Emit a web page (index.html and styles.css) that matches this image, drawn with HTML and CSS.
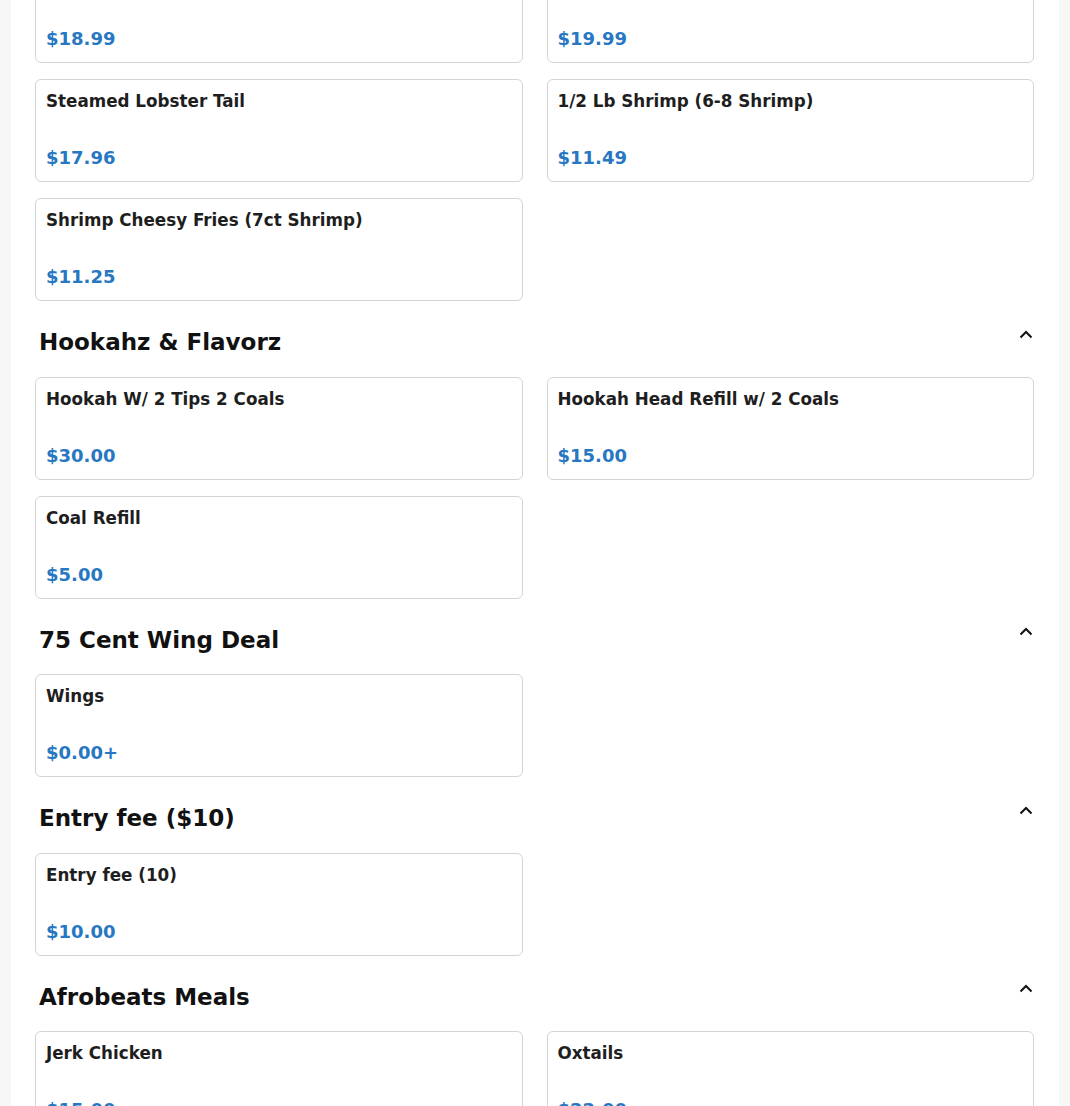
FILE: index.html
```html
<!DOCTYPE html>
<html lang="en">
<head>
<meta charset="utf-8">
<title>Menu</title>
<link rel="stylesheet" href="styles.css">
</head>
<body>
<main class="panel">
  <section class="section first">
    <div class="grid">
      <div class="card"><div class="name">Lobster Fries</div><div class="price">$18.99</div></div>
      <div class="card"><div class="name">Lobster Cheesy Fries</div><div class="price">$19.99</div></div>
      <div class="card"><div class="name">Steamed Lobster Tail</div><div class="price">$17.96</div></div>
      <div class="card"><div class="name">1/2 Lb Shrimp (6-8 Shrimp)</div><div class="price">$11.49</div></div>
      <div class="card"><div class="name">Shrimp Cheesy Fries (7ct Shrimp)</div><div class="price">$11.25</div></div>
    </div>
  </section>

  <section class="section">
    <div class="head"><h2>Hookahz &amp; Flavorz</h2><svg class="chev" viewBox="0 0 14 9" width="14" height="9"><path d="M1.5 7.5 L7 2 L12.5 7.5" fill="none" stroke="#111" stroke-width="2"/></svg></div>
    <div class="grid">
      <div class="card"><div class="name">Hookah W/ 2 Tips 2 Coals</div><div class="price">$30.00</div></div>
      <div class="card"><div class="name">Hookah Head Refill w/ 2 Coals</div><div class="price">$15.00</div></div>
      <div class="card"><div class="name">Coal Refill</div><div class="price">$5.00</div></div>
    </div>
  </section>

  <section class="section">
    <div class="head"><h2>75 Cent Wing Deal</h2><svg class="chev" viewBox="0 0 14 9" width="14" height="9"><path d="M1.5 7.5 L7 2 L12.5 7.5" fill="none" stroke="#111" stroke-width="2"/></svg></div>
    <div class="grid">
      <div class="card"><div class="name">Wings</div><div class="price">$0.00+</div></div>
    </div>
  </section>

  <section class="section">
    <div class="head"><h2>Entry fee ($10)</h2><svg class="chev" viewBox="0 0 14 9" width="14" height="9"><path d="M1.5 7.5 L7 2 L12.5 7.5" fill="none" stroke="#111" stroke-width="2"/></svg></div>
    <div class="grid">
      <div class="card"><div class="name">Entry fee (10)</div><div class="price">$10.00</div></div>
    </div>
  </section>

  <section class="section">
    <div class="head"><h2>Afrobeats Meals</h2><svg class="chev" viewBox="0 0 14 9" width="14" height="9"><path d="M1.5 7.5 L7 2 L12.5 7.5" fill="none" stroke="#111" stroke-width="2"/></svg></div>
    <div class="grid">
      <div class="card"><div class="name">Jerk Chicken</div><div class="price">$15.00</div></div>
      <div class="card"><div class="name">Oxtails</div><div class="price">$22.00</div></div>
    </div>
  </section>
</main>
</body>
</html>
```

FILE: styles.css
```css
html, body {
  margin: 0;
  padding: 0;
}
body {
  background: #f7f7f7;
  font-family: "DejaVu Sans", "Liberation Sans", sans-serif;
  color: #222;
  overflow: hidden;
}
.panel {
  margin: 0 11px;
  background: #fff;
  padding: 0 25px 40px 24px;
  min-height: 1200px;
}
.section.first {
  margin-top: -40px;
}
.section {
  padding-bottom: 1px;
}
.head {
  display: flex;
  align-items: center;
  justify-content: space-between;
  margin: 26px 0 20.5px;
  padding: 0 1px 0 4px;
  height: 28px;
}
.head h2 {
  margin: 0;
  font-size: 23px;
  line-height: 28px;
  font-weight: bold;
  color: #111;
}
.chev {
  display: block;
  margin-top: -16px;
}
.grid {
  display: grid;
  grid-template-columns: 1fr 1fr;
  column-gap: 24px;
  row-gap: 16px;
}
.card {
  box-sizing: border-box;
  height: 103px;
  border: 1px solid #d4d4d4;
  border-radius: 6px;
  padding: 11px 10px 12px;
  display: flex;
  flex-direction: column;
  justify-content: space-between;
  background: #fff;
}
.name {
  font-size: 16.75px;
  line-height: 21px;
  font-weight: bold;
  color: #1e1e1e;
}
.price {
  font-size: 18px;
  line-height: 22px;
  font-weight: bold;
  color: #2777c2;
}
```
